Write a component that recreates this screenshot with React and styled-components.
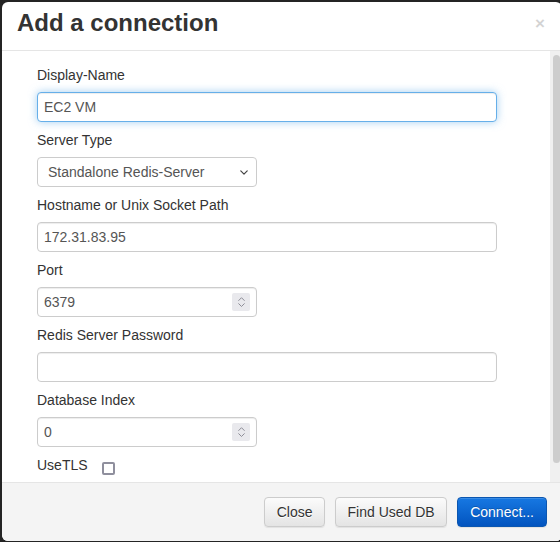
import React from "react";
import styled, { createGlobalStyle } from "styled-components";

const Global = createGlobalStyle`
  html, body {
    margin: 0;
    padding: 0;
    background: #242424;
    overflow: hidden;
  }
  body {
    font-family: "Liberation Sans", Arial, Helvetica, sans-serif;
    font-size: 14px;
    color: #333;
  }
  * { box-sizing: border-box; }
`;

const Backdrop = styled.div`
  width: 560px;
  height: 542px;
  padding: 2px 0 0 2px;
  overflow: hidden;
`;

const Modal = styled.div`
  width: 560px;
  height: 539px;
  background: #fff;
  border-radius: 6px;
  display: flex;
  flex-direction: column;
  overflow: hidden;
`;

const Header = styled.div`
  height: 49px;
  flex: none;
  display: flex;
  justify-content: space-between;
  align-items: flex-start;
  padding: 9px 17px 0 15px;
  border-bottom: 1px solid #e5e5e5;
`;

const Title = styled.h4`
  margin: 0;
  font-size: 24px;
  line-height: 1;
  font-weight: 700;
  color: #333;
`;

const CloseX = styled.button`
  border: 0;
  background: transparent;
  padding: 0;
  margin-top: 4px;
  font-family: "Liberation Sans", Arial, sans-serif;
  font-size: 17px;
  line-height: 1;
  font-weight: 700;
  color: #000;
  opacity: 0.17;
  cursor: pointer;
`;

const Body = styled.div`
  flex: 1;
  display: flex;
  min-height: 0;
`;

const Content = styled.div`
  flex: 1;
  padding: 14px 0 0 35px;
  overflow: hidden;
`;

const Track = styled.div`
  width: 12px;
  flex: none;
  background: #f0f0f0;
  padding-top: 4px;
  display: flex;
  justify-content: center;
`;

const Thumb = styled.div`
  width: 7px;
  height: 408px;
  background: #cdcdcd;
  border-radius: 4px;
`;

const Group = styled.div`
  margin-bottom: 8px;
`;

const Label = styled.label`
  display: block;
  font-size: 14px;
  line-height: 20px;
  color: #333;
  margin-bottom: 7px;
`;

const TextInput = styled.input`
  display: block;
  width: ${(p) => p.$w}px;
  height: 30px;
  padding: 0 6px;
  font-family: "Liberation Sans", Arial, sans-serif;
  font-size: 14px;
  color: #555;
  background: #fff;
  border: 1px solid ${(p) => (p.$focus ? "#66afe9" : "#ccc")};
  border-radius: 4px;
  outline: none;
  box-shadow: ${(p) =>
    p.$focus
      ? "inset 0 1px 1px rgba(0,0,0,.075), 0 0 8px rgba(102,175,233,.6)"
      : "inset 0 1px 1px rgba(0,0,0,.075)"};
`;

const SelectBox = styled.div`
  width: 220px;
  height: 30px;
  display: flex;
  align-items: center;
  justify-content: space-between;
  padding: 0 8px 0 10px;
  border: 1px solid #ccc;
  border-radius: 4px;
  font-size: 14px;
  color: #555;
  background: #fff;
`;

const NumberBox = styled.div`
  width: 220px;
  height: 30px;
  display: flex;
  align-items: center;
  padding: 0 6px;
  border: 1px solid #ccc;
  border-radius: 4px;
  background: #fff;
  box-shadow: inset 0 1px 1px rgba(0, 0, 0, 0.075);
`;

const NumberText = styled.input`
  flex: 1;
  min-width: 0;
  border: 0;
  outline: none;
  padding: 0;
  font-family: "Liberation Sans", Arial, sans-serif;
  font-size: 14px;
  color: #555;
  background: transparent;
`;

const Spinner = styled.div`
  width: 18px;
  height: 18px;
  background: #e9e9ed;
  border-radius: 2px;
  display: flex;
  flex-direction: column;
  align-items: center;
  justify-content: center;
  gap: 2px;
`;

const CheckRow = styled.div`
  display: flex;
  align-items: center;
  gap: 14px;
  line-height: 20px;
  font-size: 14px;
  color: #333;
`;

const Check = styled.span`
  width: 13px;
  height: 13px;
  margin-top: 6px;
  border: 2px solid #8f8f9d;
  border-radius: 2px;
  background: #fff;
`;

const Footer = styled.div`
  flex: none;
  height: 59px;
  border-top: 1px solid #e5e5e5;
  background: #f4f4f4;
  display: flex;
  justify-content: flex-end;
  align-items: flex-start;
  gap: 10px;
  padding: 14px 15px 0 0;
`;

const Button = styled.button`
  height: 30px;
  padding: 0 ${(p) => (p.$primary ? 12 : 11.5)}px;
  font-family: "Liberation Sans", Arial, sans-serif;
  font-size: 14px;
  border-radius: 4px;
  cursor: pointer;
  border: 1px solid ${(p) => (p.$primary ? "#0b56b0" : "#ccc")};
  color: ${(p) => (p.$primary ? "#fff" : "#333")};
  background: ${(p) =>
    p.$primary
      ? "linear-gradient(to bottom, #1778e2 0%, #0254bf 100%)"
      : "linear-gradient(to bottom, #fbfbfb 0%, #e4e4e4 100%)"};
  text-shadow: ${(p) => (p.$primary ? "0 -1px 0 rgba(0,0,0,.2)" : "0 1px 0 #fff")};
  box-shadow: inset 0 1px 0 rgba(255, 255, 255, 0.15), 0 1px 1px rgba(0, 0, 0, 0.075);
`;

const Chevron = ({ up, size = 8 }) => (
  <svg width={size} height={size * 0.6} viewBox="0 0 10 6" fill="none">
    <path
      d={up ? "M1 5 L5 1 L9 5" : "M1 1 L5 5 L9 1"}
      stroke="#8a8a95"
      strokeWidth="1.4"
      strokeLinecap="round"
      strokeLinejoin="round"
    />
  </svg>
);

const SelectChevron = () => (
  <svg width="8" height="5" viewBox="0 0 10 6" fill="none">
    <path d="M1 1 L5 5 L9 1" stroke="#444" strokeWidth="1.5" strokeLinecap="round" strokeLinejoin="round" />
  </svg>
);

const NumberField = ({ value }) => (
  <NumberBox>
    <NumberText defaultValue={value} />
    <Spinner>
      <Chevron up size={7} />
      <Chevron size={7} />
    </Spinner>
  </NumberBox>
);

export default function App() {
  return (
    <>
      <Global />
      <Backdrop>
        <Modal>
          <Header>
            <Title>Add a connection</Title>
            <CloseX aria-label="Close">×</CloseX>
          </Header>
          <Body>
            <Content>
              <Group>
                <Label>Display-Name</Label>
                <TextInput $w={460} $focus defaultValue="EC2 VM" />
              </Group>
              <Group>
                <Label>Server Type</Label>
                <SelectBox>
                  <span>Standalone Redis-Server</span>
                  <SelectChevron />
                </SelectBox>
              </Group>
              <Group>
                <Label>Hostname or Unix Socket Path</Label>
                <TextInput $w={460} defaultValue="172.31.83.95" />
              </Group>
              <Group>
                <Label>Port</Label>
                <NumberField value="6379" />
              </Group>
              <Group>
                <Label>Redis Server Password</Label>
                <TextInput $w={460} type="password" defaultValue="" />
              </Group>
              <Group>
                <Label>Database Index</Label>
                <NumberField value="0" />
              </Group>
              <CheckRow>
                <span>UseTLS</span>
                <Check />
              </CheckRow>
            </Content>
            <Track>
              <Thumb />
            </Track>
          </Body>
          <Footer>
            <Button>Close</Button>
            <Button>Find Used DB</Button>
            <Button $primary>Connect...</Button>
          </Footer>
        </Modal>
      </Backdrop>
    </>
  );
}
